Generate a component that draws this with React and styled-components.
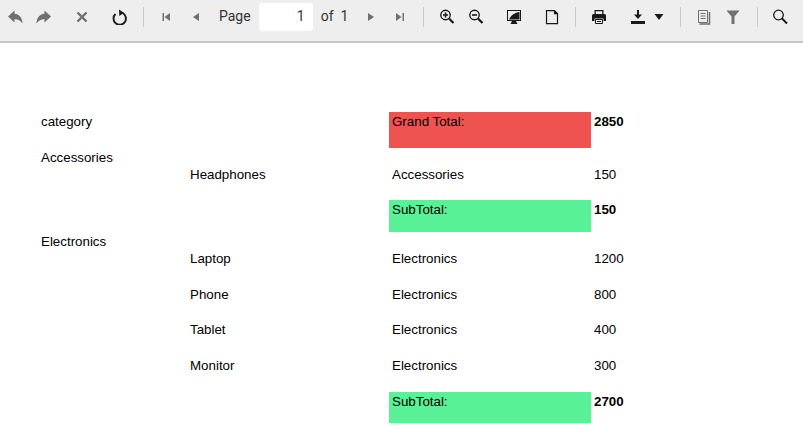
import styled, { createGlobalStyle } from "styled-components";

const GlobalStyle = createGlobalStyle`
  html, body {
    margin: 0;
    padding: 0;
    background: #fff;
    overflow: hidden;
  }
`;

const Viewer = styled.div`
  width: 803px;
  height: 443px;
  overflow: hidden;
  display: flex;
  flex-direction: column;
  font-family: Roboto, "Liberation Sans", sans-serif;
`;

const Toolbar = styled.div`
  flex: none;
  box-sizing: border-box;
  height: 43px;
  background: #eeeeee;
  border-bottom: 2px solid #c8c8c8;
  display: flex;
  align-items: center;
  padding-bottom: 7px;
  color: #333;
  font-size: 14px;
`;

const ToolIcon = styled.span`
  flex: none;
  display: flex;
  width: ${(p) => p.$w || 16}px;
  height: 16px;
  margin-left: ${(p) => p.$ml || 0}px;
  svg {
    display: block;
  }
`;

const Divider = styled.span`
  flex: none;
  width: 1px;
  height: 20px;
  background: #c9c9c9;
  margin-left: ${(p) => p.$ml}px;
`;

const Label = styled.span`
  flex: none;
  margin-left: ${(p) => p.$ml}px;
  margin-bottom: 2px;
`;

const PageInput = styled.div`
  flex: none;
  box-sizing: border-box;
  width: 54px;
  height: 28px;
  margin-left: 8px;
  background: #fff;
  border-radius: 3px;
  text-align: right;
  padding-right: 8px;
  line-height: 26px;
`;

const Page = styled.div`
  flex: 1;
  padding: 69px 0 0 38px;
  color: #000;
  font-family: "Liberation Sans", Arial, sans-serif;
  font-size: 13.33px;
`;

const ReportGrid = styled.div`
  display: grid;
  grid-template-columns: 149px 202px 202px 120px;
  grid-auto-rows: auto;
`;

const Cell = styled.div`
  box-sizing: border-box;
  height: ${(p) => p.$h}px;
  padding: ${(p) => (p.$data ? 3 : 2)}px 3px 0;
  line-height: 15px;
  background: ${(p) => p.$bg || "transparent"};
  font-weight: ${(p) => (p.$bold ? 700 : 400)};
`;

const GREY = "#707070";
const DARK = "#1a1a1a";

const Undo = () => (
  <svg width="16" height="16" viewBox="0 0 16 16" fill={GREY}>
    <path d="M7.500 1.500 1 7.500 7.500 13.500V10.200C10.500 10 13 11 15.500 14.500 15.500 9 12 5 7.500 4.800z" />
  </svg>
);
const Redo = () => (
  <svg width="16" height="16" viewBox="0 0 16 16" fill={GREY}>
    <path d="M8.500 1.500 15 7.500 8.500 13.500V10.200C5.500 10 3 11 .5 14.500 .5 9 4 5 8.500 4.800z" />
  </svg>
);
const Close = () => (
  <svg width="16" height="16" viewBox="0 0 16 16" stroke={GREY} strokeWidth="2.400" fill="none">
    <path d="M3.500 3.500l9 9M12.500 3.500l-9 9" />
  </svg>
);
const Refresh = () => (
  <svg width="16" height="16" viewBox="0 0 16 16" fill="none">
    <path d="M10.500 4A6.200 6.200 0 1 1 3.500 5" stroke={DARK} strokeWidth="1.900" />
    <path d="M7 0.500 12 3.800 7.300 7z" fill={DARK} />
  </svg>
);
const First = () => (
  <svg width="16" height="16" viewBox="0 0 16 16" fill={GREY}>
    <path d="M4.500 4h1.500v8H4.500zM12 4v8L6.500 8z" />
  </svg>
);
const Prev = () => (
  <svg width="16" height="16" viewBox="0 0 16 16" fill={GREY}>
    <path d="M11 4v8L5 8z" />
  </svg>
);
const Next = () => (
  <svg width="16" height="16" viewBox="0 0 16 16" fill={GREY}>
    <path d="M5 4v8l6-4z" />
  </svg>
);
const Last = () => (
  <svg width="16" height="16" viewBox="0 0 16 16" fill={GREY}>
    <path d="M12 4h-1.500v8H12zM4 4v8l5.500-4z" />
  </svg>
);
const ZoomIn = () => (
  <svg width="16" height="16" viewBox="0 0 16 16" fill="none" stroke={DARK}>
    <circle cx="6.500" cy="6" r="4.700" strokeWidth="1.400" />
    <path d="M10 9.500 14.500 14" strokeWidth="2.200" />
    <path d="M4 6h5M6.500 3.500v5" strokeWidth="1.600" />
  </svg>
);
const ZoomOut = () => (
  <svg width="16" height="16" viewBox="0 0 16 16" fill="none" stroke={DARK}>
    <circle cx="6.500" cy="6" r="4.700" strokeWidth="1.400" />
    <path d="M10 9.500 14.500 14" strokeWidth="2.200" />
    <path d="M4 6h5" strokeWidth="1.600" />
  </svg>
);
const FitWidth = () => (
  <svg width="16" height="16" viewBox="0 0 16 16" fill="none">
    <rect x="1.500" y="1.500" width="13" height="10" stroke={DARK} />
    <path d="M3 10.500C5 6 9 3.500 13.500 3v7.500z" fill={DARK} />
    <path d="M4.500 15 6 12h4l1.500 3z" fill={DARK} />
  </svg>
);
const PageIcon = () => (
  <svg width="16" height="16" viewBox="0 0 16 16" fill="none" stroke={DARK} strokeWidth="1.200">
    <path d="M2.500 1.600h8l3 3v10h-11zM10.500 1.600v3h3" />
  </svg>
);
const Printer = () => (
  <svg width="16" height="16" viewBox="0 0 16 16" fill={DARK}>
    <path d="M3.500 1h9v4h-1.300V2.300H4.800V5H3.500z" />
    <path d="M2.500 5h11A1.500 1.500 0 0 1 15 6.500V12h-2.500V9.500h-9V12H1V6.500A1.500 1.500 0 0 1 2.500 5z" />
    <path d="M4.500 10.500h7V14.500h-7zM6 12.500h4" fill="none" stroke={DARK} />
  </svg>
);
const Download = () => (
  <svg width="16" height="16" viewBox="0 0 16 16" fill={DARK}>
    <path d="M7 1h2v4.500h3L8 10 4 5.500h3zM1 12h14v3H1z" />
  </svg>
);
const Caret = () => (
  <svg width="10" height="16" viewBox="0 0 10 16" fill={DARK}>
    <path d="M0.500 5h9L5 11z" />
  </svg>
);
const Book = () => (
  <svg width="16" height="16" viewBox="0 0 16 16" fill="none" stroke={GREY}>
    <path d="M2.500 1.500h9v12h-9zM4.500 4.500h5M4.500 7h5M4.500 9.500h5" />
    <path d="M13.500 3v12h-10" strokeWidth="1.500" />
  </svg>
);
const Filter = () => (
  <svg width="16" height="16" viewBox="0 0 16 16" fill={GREY}>
    <path d="M1.500 1.500h13L9.500 7.500V15h-3V7.500z" />
  </svg>
);
const Search = () => (
  <svg width="16" height="16" viewBox="0 0 16 16" fill="none" stroke={DARK}>
    <circle cx="6.500" cy="6" r="4.800" strokeWidth="1.300" />
    <path d="M10 9.500 15 14.500" strokeWidth="2" />
  </svg>
);

const rows = [
  { h: 36, cells: ["category", "", "Grand Total:", "2850"], fill: "#ef5350", bold: true },
  { h: 16, cells: ["Accessories", "", "", ""] },
  { h: 36, data: true, cells: ["", "Headphones", "Accessories", "150"] },
  { h: 32, cells: ["", "", "SubTotal:", "150"], fill: "#58f195", bold: true },
  { h: 16, cells: ["Electronics", "", "", ""] },
  { h: 36, data: true, cells: ["", "Laptop", "Electronics", "1200"] },
  { h: 35, data: true, cells: ["", "Phone", "Electronics", "800"] },
  { h: 36, data: true, cells: ["", "Tablet", "Electronics", "400"] },
  { h: 37, data: true, cells: ["", "Monitor", "Electronics", "300"] },
  { h: 31, cells: ["", "", "SubTotal:", "2700"], fill: "#58f195", bold: true },
];

export default function App() {
  return (
    <Viewer>
      <GlobalStyle />
      <Toolbar>
        <ToolIcon $ml={7}><Undo /></ToolIcon>
        <ToolIcon $ml={13}><Redo /></ToolIcon>
        <ToolIcon $ml={22}><Close /></ToolIcon>
        <ToolIcon $ml={22}><Refresh /></ToolIcon>
        <Divider $ml={15} />
        <ToolIcon $ml={14}><First /></ToolIcon>
        <ToolIcon $ml={14}><Prev /></ToolIcon>
        <Label $ml={15}>Page</Label>
        <PageInput>1</PageInput>
        <Label $ml={8}>of</Label>
        <Label $ml={7}>1</Label>
        <ToolIcon $ml={15}><Next /></ToolIcon>
        <ToolIcon $ml={13}><Last /></ToolIcon>
        <Divider $ml={15} />
        <ToolIcon $ml={15}><ZoomIn /></ToolIcon>
        <ToolIcon $ml={13}><ZoomOut /></ToolIcon>
        <ToolIcon $ml={22}><FitWidth /></ToolIcon>
        <ToolIcon $ml={22}><PageIcon /></ToolIcon>
        <Divider $ml={15} />
        <ToolIcon $ml={15}><Printer /></ToolIcon>
        <ToolIcon $ml={23}><Download /></ToolIcon>
        <ToolIcon $ml={8} $w={10}><Caret /></ToolIcon>
        <Divider $ml={16} />
        <ToolIcon $ml={15}><Book /></ToolIcon>
        <ToolIcon $ml={13}><Filter /></ToolIcon>
        <Divider $ml={16} />
        <ToolIcon $ml={14}><Search /></ToolIcon>
      </Toolbar>
      <Page>
        <ReportGrid>
          {rows.map((row, r) =>
            row.cells.map((text, c) => (
              <Cell
                key={`${r}-${c}`}
                $h={row.h}
                $data={row.data}
                $bg={c === 2 ? row.fill : undefined}
                $bold={c === 3 && row.bold}
              >
                {text}
              </Cell>
            ))
          )}
        </ReportGrid>
      </Page>
    </Viewer>
  );
}
